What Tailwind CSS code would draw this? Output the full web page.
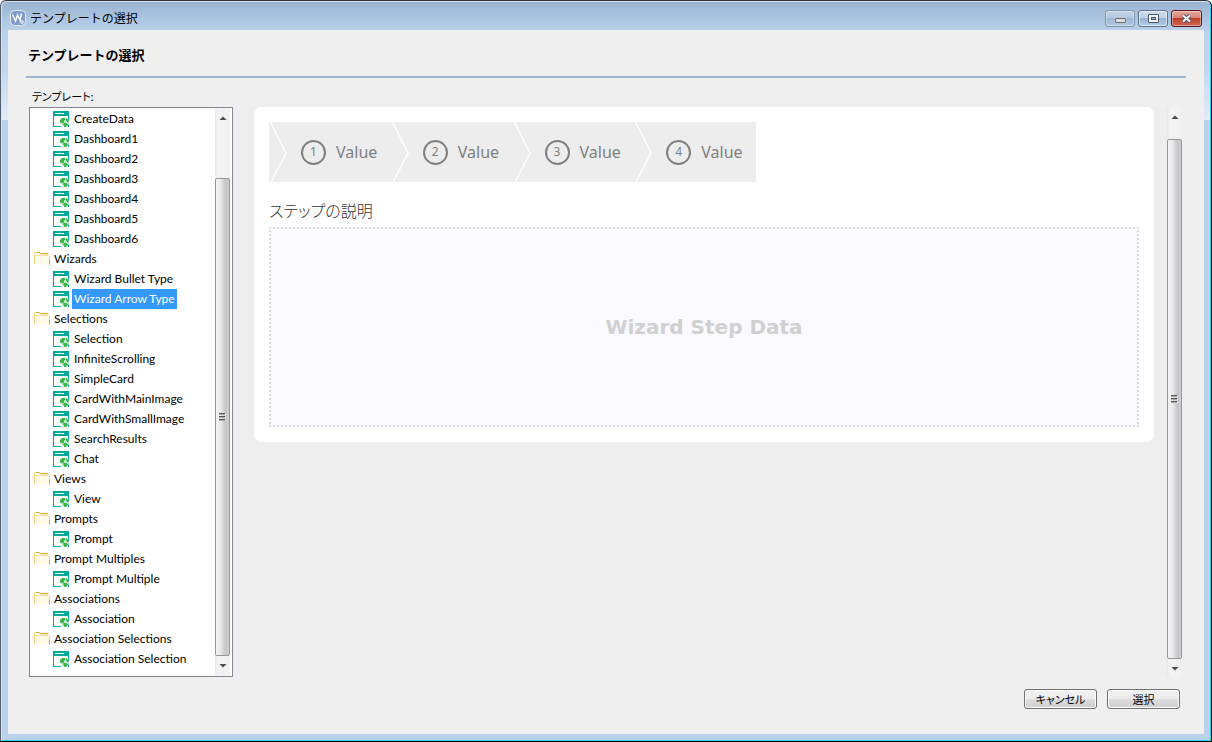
<!DOCTYPE html>
<html lang="ja">
<head>
  <meta charset="UTF-8">
  <meta name="viewport" content="width=device-width, initial-scale=1.0">
  <title>テンプレートの選択</title>
  <script src="https://cdn.jsdelivr.net/npm/@tailwindcss/browser@4"></script>
</head>
<body class="font-['Noto_Sans_CJK_JP',sans-serif] text-xs text-black">
  <!-- Shared icons -->
  <svg class="hidden">
    <symbol id="icon-folder" viewBox="0 0 16 16">
      <path d="M1 4h14.500v9.500H1z" fill="#fff9ea"/>
      <path d="M.5 13V2.500L1.500 1.500H5L6.500 3H14.500" fill="none" stroke="#f3cf78"/>
      <path d="M1.500 1.500H5L6.500 2.500H14" fill="none" stroke="#e3ac2c"/>
      <path d="M1 4.500H14.500" stroke="#f6dfa6"/>
      <path d="M15.500 5v5" stroke="#f3cf78"/>
      <path d="M15.500 9v4.500" stroke="#dfa52a"/>
    </symbol>
    <symbol id="icon-template" viewBox="0 0 16 16">
      <path d="M0 0h16v16H0z" fill="#00a99d"/>
      <path d="M2 2h9v1H2zM1 5h14v10H1z" fill="#fff"/>
      <path d="M8 15V9l3-4h4v11H8z" fill="#fff"/>
      <path d="M15 5h1v11h-1z" fill="#00a99d"/>
      <circle cx="11.500" cy="11.500" r="4.500" fill="#e3f5e6"/>
      <path d="M7 9l2-2h3l.5 1.500-1.500 1.500.5 1-2 1.500L8 12 7 11zM13 7l2 1.500 1 2.500-1.500.5-1.500-2zM10 12.500l2.500-1 2.500 1.500-.5 1.500-2 1.500H11z" fill="#39b54a"/>
    </symbol>
    <symbol id="icon-grip" viewBox="0 0 7 9">
      <path d="M0 1.500h7M0 4.500h7M0 7.500h7" stroke="#fff"/>
      <path d="M0 .5h6M0 3.500h6M0 6.500h6" stroke="#555"/>
      <path d="M0 1.500h6M0 4.500h6M0 7.500h6" stroke="#aaa"/>
    </symbol>
    <symbol id="icon-up" viewBox="0 0 8 4"><path d="M.5 4L4 .5 7.500 4z" fill="#4a4a4a"/></symbol>
    <symbol id="icon-down" viewBox="0 0 8 4"><path d="M.5 0L4 3.500 7.500 0z" fill="#4a4a4a"/></symbol>
  </svg>

  <div class="flex h-screen flex-col rounded-t-md border border-black border-t-[#33333a] border-l-[#55606c] bg-[linear-gradient(#98b3d2_0,#b9d1ea_30px,#c3d8ee_70px,#e2ecf8_119px,#b9d1ea_119px)]">
    <div class="flex min-h-0 flex-1 flex-col rounded-t-md border-t border-r border-b border-l border-t-[#d5e2f0] border-r-[#2fd3ee] border-b-[#2fd3ee] border-l-[#d5e2f0] px-[6px] pb-[6px]">

      <!-- Title bar -->
      <header class="flex h-7 shrink-0 items-center justify-between pr-0.5">
        <div class="flex items-center gap-1 pt-1 pl-[2px]">
          <svg class="size-4" viewBox="0 0 16 16">
            <rect x=".5" y=".5" width="15" height="15" rx="4" fill="#7f9bcb" stroke="#e6edf8"/>
            <path d="M2.500 4.500L5.500 11 7.500 5 10 10 11.500 3.500" fill="none" stroke="#fff" stroke-width="1.500"/>
            <circle cx="12" cy="12" r="1.500" fill="#b9cdea" stroke="#fff" stroke-width=".6"/>
          </svg>
          <span>テンプレートの選択</span>
        </div>
        <div class="flex gap-[3px] pt-1">
          <button aria-label="最小化" class="flex h-[17px] w-[30px] items-center justify-center rounded-[3px] border border-[#7d94b0] bg-[linear-gradient(#bfd1e6,#b3c8e0_50%,#9db7d4_50%,#b3cae3)] shadow-[inset_0_0_0_1px_#ffffff66]">
            <svg class="mt-1 h-[5px] w-[11px]" viewBox="0 0 11 5"><rect x=".5" y=".5" width="10" height="4" rx=".5" fill="#ddd" stroke="#6e6e6e"/></svg>
          </button>
          <button aria-label="最大化" class="flex h-[17px] w-[30px] items-center justify-center rounded-[3px] border border-[#5c728f] bg-[linear-gradient(#cddcee,#bed1e8_50%,#98b4d4_50%,#b5cde8)] shadow-[inset_0_0_0_1px_#ffffff88]">
            <svg class="h-[9px] w-[11px]" viewBox="0 0 11 9"><rect x=".5" y=".5" width="10" height="8" rx=".5" fill="#f4f4f4" stroke="#4d5568"/><rect x="3.500" y="3.500" width="4" height="2" fill="#9db7d4" stroke="#4d5568"/></svg>
          </button>
          <button aria-label="閉じる" class="flex h-[17px] w-[31px] items-center justify-center rounded-[3px] border border-[#5a1620] bg-[linear-gradient(#e5a598,#d88474_50%,#bd3f2b_50%,#cf6a50)] shadow-[inset_0_0_0_1px_#ffffff66]">
            <svg class="h-[9px] w-[11px]" viewBox="0 0 11 9"><path d="M2 1.500l7 6M9 1.500l-7 6" stroke="#4d5568" stroke-width="4"/><path d="M2 1.500l7 6M9 1.500l-7 6" stroke="#f6f6f6" stroke-width="2.200"/></svg>
          </button>
        </div>
      </header>

      <main class="flex min-h-0 flex-1 flex-col bg-[#efefef] px-[18px] pb-[25px]">
        <h1 class="border-b-2 border-[#99b4d1] px-0.5 pt-4 pb-3 text-[13px] leading-[18px] font-bold">テンプレートの選択</h1>
        <h2 id="treeLabel" class="px-1.5 pt-2.5 pb-0.5 text-[11px] leading-[16px] [font-feature-settings:'palt']">テンプレート:</h2>

        <div class="flex min-h-0 flex-1 gap-[5px] pt-px pr-1 pl-[3px]">
          <!-- Template tree -->
          <div class="flex w-[204px] shrink-0 border border-[#828790] bg-white">
            <ul id="templateTree" aria-labelledby="treeLabel" class="min-w-0 flex-1 overflow-hidden pt-px font-['Lato',sans-serif]"></ul>
            <div class="flex w-[17px] shrink-0 flex-col items-center border-r-2 border-white bg-[linear-gradient(90deg,#e8e8e8,#f3f3f3_20%,#f0f0f0)]">
              <svg class="mt-2 mb-[58px] h-1 w-2 shrink-0"><use href="#icon-up"/></svg>
              <div class="flex w-full flex-1 items-center justify-center rounded-xs border border-[#979797] bg-[linear-gradient(90deg,#f5f5f5,#e9e9eb_35%,#c4c4c8_75%,#d0d0d4)]">
                <svg class="h-[9px] w-[7px]"><use href="#icon-grip"/></svg>
              </div>
              <svg class="my-2 h-1 w-2 shrink-0"><use href="#icon-down"/></svg>
            </div>
          </div>

          <!-- Preview -->
          <div class="flex min-w-0 flex-1 bg-[#eeeeee]">
            <div class="min-w-0 flex-1 pr-[13px] pl-4">
              <section class="rounded-lg bg-white p-[15px]">
                <ol id="wizardSteps" class="grid max-w-[487px] grid-cols-4"></ol>
                <p class="pt-4 pb-[5px] text-base leading-6 font-light text-[#333] [font-feature-settings:'palt']">ステップの説明</p>
                <div class="flex h-[200px] items-center justify-center border-2 border-dotted border-[#dcdce4] bg-[#f9f9ff] font-['DejaVu_Sans',sans-serif] text-xl font-bold text-[#d0d0d0]">Wizard Step Data</div>
              </section>
            </div>
            <div class="flex w-[15px] shrink-0 flex-col items-center bg-[linear-gradient(90deg,#e6e6e6,#f3f3f3_20%,#f0f0f0)]">
              <svg class="mt-2 mb-5 h-1 w-2 shrink-0"><use href="#icon-up"/></svg>
              <div class="flex w-full flex-1 items-center justify-center rounded-xs border border-[#979797] bg-[linear-gradient(90deg,#f5f5f5,#e9e9eb_35%,#c4c4c8_75%,#d0d0d4)]">
                <svg class="h-[9px] w-[7px]"><use href="#icon-grip"/></svg>
              </div>
              <svg class="mt-2 mb-1.5 h-1 w-2 shrink-0"><use href="#icon-down"/></svg>
            </div>
          </div>
        </div>

        <!-- Actions -->
        <div class="flex justify-end gap-2.5 pt-3 pr-1.5 [font-feature-settings:'palt']">
          <button class="h-5 w-[73px] rounded-[3px] border border-[#707070] bg-[linear-gradient(#f2f2f2,#ebebeb_50%,#dddddd_50%,#cfcfcf)] text-[11px] leading-4 shadow-[inset_0_0_0_1px_#fcfcfc]">キャンセル</button>
          <button class="h-5 w-[73px] rounded-[3px] border border-[#707070] bg-[linear-gradient(#f2f2f2,#ebebeb_50%,#dddddd_50%,#cfcfcf)] text-[11px] leading-4 shadow-[inset_0_0_0_1px_#fcfcfc]">選択</button>
        </div>
      </main>
    </div>
  </div>

  <script>
    // The first group is scrolled past its folder row
    const groups = [
      { items: ['CreateData', 'Dashboard1', 'Dashboard2', 'Dashboard3', 'Dashboard4', 'Dashboard5', 'Dashboard6'] },
      { name: 'Wizards', items: ['Wizard Bullet Type', 'Wizard Arrow Type'] },
      { name: 'Selections', items: ['Selection', 'InfiniteScrolling', 'SimpleCard', 'CardWithMainImage', 'CardWithSmallImage', 'SearchResults', 'Chat'] },
      { name: 'Views', items: ['View'] },
      { name: 'Prompts', items: ['Prompt'] },
      { name: 'Prompt Multiples', items: ['Prompt Multiple'] },
      { name: 'Associations', items: ['Association'] },
      { name: 'Association Selections', items: ['Association Selection'] },
    ];
    const selected = 'Wizard Arrow Type';

    const tree = document.getElementById('templateTree');
    groups.forEach(group => {
      if (group.name) {
        tree.innerHTML += `
          <li class="flex h-5 items-center gap-1 pl-1 whitespace-nowrap">
            <svg class="size-4 shrink-0"><use href="#icon-folder"/></svg>
            <span>${group.name}</span>
          </li>`;
      }
      group.items.forEach(item => {
        const state = item === selected ? 'bg-[#3399ff] text-white' : '';
        tree.innerHTML += `
          <li class="flex h-5 items-center gap-[3px] pl-[23px] whitespace-nowrap">
            <svg class="size-4 shrink-0"><use href="#icon-template"/></svg>
            <button class="h-5 px-0.5 ${state}">${item}</button>
          </li>`;
      });
    });

    const steps = document.getElementById('wizardSteps');
    [1, 2, 3, 4].forEach(n => {
      steps.innerHTML += `
        <li class="relative flex h-[60px] items-center gap-2.5 bg-[#ededed] pl-8 font-['Noto_Sans',sans-serif] text-[#808080]">
          <svg class="absolute top-0 left-0 h-[60px] w-5" viewBox="0 0 20 60"><path d="M1.500 0L17 31 2 60" fill="none" stroke="#fff" stroke-width="1.500"/></svg>
          <span class="flex size-[25px] items-center justify-center rounded-full border-2 border-[#808080] text-xs">${n}</span>
          <span class="text-base">Value</span>
        </li>`;
    });
  </script>
</body>
</html>
